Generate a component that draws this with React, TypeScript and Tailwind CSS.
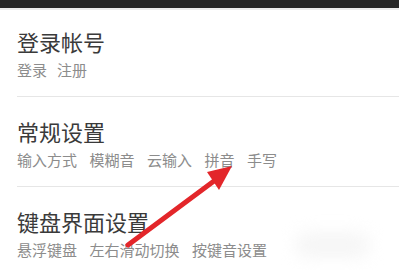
import React from "react";

const font = { fontFamily: '"Noto Sans CJK SC", "Noto Sans", sans-serif' };

function Section({
  title,
  items,
  pt,
  gap,
  divider = true,
}: {
  title: string;
  items: string[];
  pt: string;
  gap: string;
  divider?: boolean;
}) {
  return (
    <div className={`pl-[17px] ${pt}`}>
      <div className="text-[22px] leading-[30px] text-[#3a3a3a]">{title}</div>
      <div className={`mt-[4px] flex text-[15px] leading-[20px] text-[#8c8c8c] ${gap}`}>
        {items.map((t) => (
          <span key={t}>{t}</span>
        ))}
      </div>
      {divider && <div className="mt-[16px] h-px bg-[#e6e6e6]" />}
    </div>
  );
}

export default function App() {
  return (
    <div className="relative w-[399px] h-[270px] overflow-hidden bg-white" style={font}>
      <div className="h-[8px] bg-[#262626]" />
      <div className="h-[2px] bg-[#ececec]" />
      <Section title="登录帐号" items={["登录", "注册"]} pt="pt-[16px]" gap="gap-[10px]" />
      <Section
        title="常规设置"
        items={["输入方式", "模糊音", "云输入", "拼音", "手写"]}
        pt="pt-[19px]"
        gap="gap-[12.5px]"
      />
      <Section
        title="键盘界面设置"
        items={["悬浮键盘", "左右滑动切换", "按键音设置"]}
        pt="pt-[19px]"
        gap="gap-[12.5px]"
        divider={false}
      />
      <div className="absolute left-[295px] top-[232px] w-[75px] h-[26px] rounded-full bg-[#f6f6f6] blur-[8px]" />
      <svg className="absolute left-0 top-0" width="399" height="270" viewBox="0 0 399 270">
        <line x1="128" y1="245" x2="214" y2="181" stroke="#e3262a" strokeWidth="5" strokeLinecap="round" />
        <polygon points="232,166 207,172 219,190" fill="#e3262a" />
      </svg>
    </div>
  );
}
